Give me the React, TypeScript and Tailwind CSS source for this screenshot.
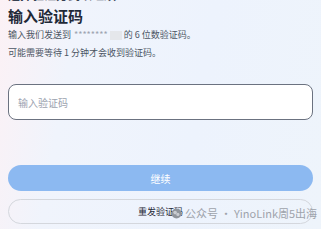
import React from "react";

export default function App() {
  const font = { fontFamily: '"Noto Sans CJK SC", "Noto Sans", sans-serif' };
  return (
    <div
      className="relative h-[229px] w-[321px] overflow-hidden bg-[linear-gradient(100deg,#fcf1f5_0%,#f0f4fc_22%,#edf3fd_60%,#eef4fb_100%)]"
      style={font}
    >
      <div className="flex flex-col px-[8px]">
        <div className="-mt-[13px] h-[16px] text-[12px] font-bold leading-[16px] text-[#374151]">
          选择验证方式以继续
        </div>
        <h1 className="mt-[3px] text-[15px] font-bold leading-[20px] text-[#1f2937]">输入验证码</h1>
        <p className="mt-[0px] flex items-center text-[9px] leading-[18px] text-[#4b5563]">
          输入我们发送到<span className="ml-[3px] text-[#9ca3af]">********</span>
          <span className="mx-[2px] inline-block h-[9px] w-[12px] bg-[#e5e7eb]"></span>
          的 6 位数验证码。
        </p>
        <p className="mt-[0px] text-[9px] leading-[18px] text-[#4b5563]">可能需要等待 1 分钟才会收到验证码。</p>
        <div className="mt-[22px] flex h-[36px] items-center rounded-[8px] border border-[#6b7280] bg-white px-[9px]">
          <span className="text-[10px] text-[#9ca3af]">输入验证码</span>
        </div>
        <button className="mt-[45px] flex h-[26px] items-center justify-center rounded-full bg-[#8cb9f1] text-[10px] text-white">
          继续
        </button>
        <button className="mt-[8px] flex h-[25px] items-center justify-center rounded-full border border-[#d4d7dd] text-[9px] text-[#1f2937]">
          重发验证码
        </button>
      </div>
      <div className="absolute left-[171px] top-[205px] flex items-center gap-[3px] whitespace-nowrap text-[11px] leading-[16px] text-[#9ea3ab]">
        <svg width="11" height="11" viewBox="0 0 24 24">
          <circle cx="12" cy="12" r="11" fill="#8f949b" />
          <circle cx="9" cy="10" r="4" fill="#c9ccd1" />
          <circle cx="15" cy="14" r="3.5" fill="#c9ccd1" />
        </svg>
        <span>公众号 · YinoLink周5出海</span>
      </div>
    </div>
  );
}
